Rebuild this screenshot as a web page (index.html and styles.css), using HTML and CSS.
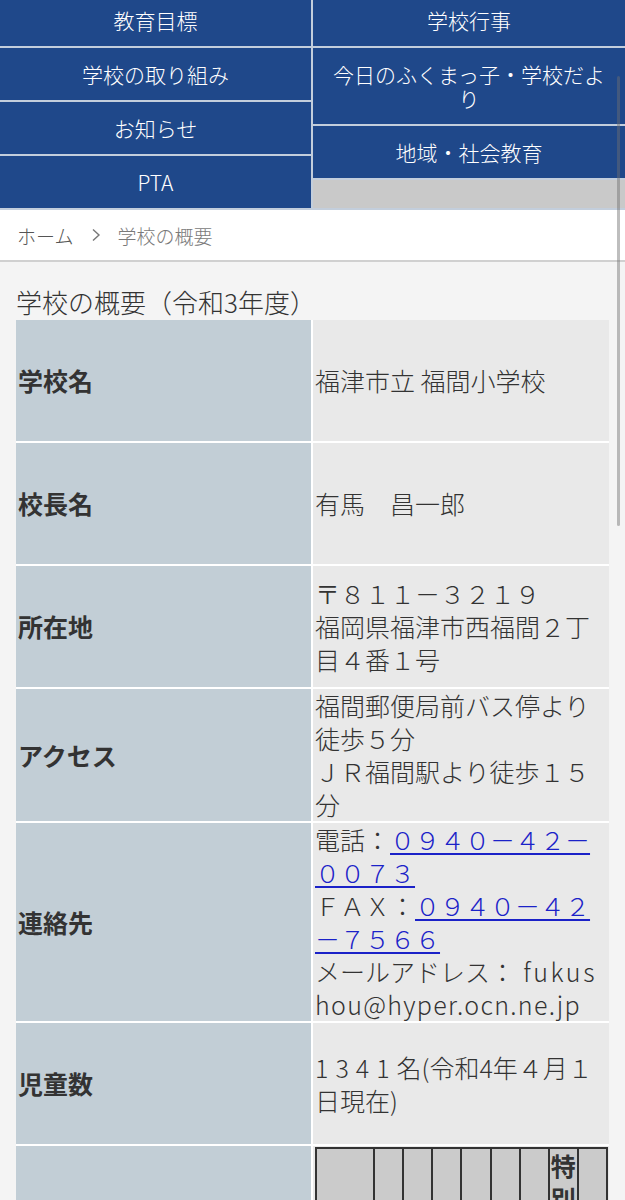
FILE: index.html
```html
<!DOCTYPE html>
<html lang="ja">
<head>
<meta charset="utf-8">
<title>学校の概要</title>
<link rel="stylesheet" href="styles.css">
</head>
<body>
<nav class="gnav">
  <ul class="gnav-col">
    <li class="gnav-item">教育目標</li>
    <li class="gnav-item">学校の取り組み</li>
    <li class="gnav-item">お知らせ</li>
    <li class="gnav-item">PTA</li>
  </ul>
  <ul class="gnav-col">
    <li class="gnav-item">学校行事</li>
    <li class="gnav-item">今日のふくまっ子・学校だより</li>
    <li class="gnav-item">地域・社会教育</li>
    <li class="gnav-filler"></li>
  </ul>
</nav>

<div class="breadcrumb">
  <span class="crumb">ホーム</span>
  <svg class="crumb-sep" width="10" height="14" viewBox="0 0 10 14"><polyline points="2,1.5 8,7 2,12.5" fill="none" stroke="#777" stroke-width="1.4"/></svg>
  <span class="crumb current">学校の概要</span>
</div>

<main class="main">
  <h1 class="page-title">学校の概要（令和3年度）</h1>
  <table class="outline">
    <colgroup><col class="col-head"><col class="col-body"></colgroup>
    <tr><th>学校名</th><td>福津市立 福間小学校</td></tr>
    <tr><th>校長名</th><td>有馬　昌一郎</td></tr>
    <tr><th>所在地</th><td>〒８１１－３２１９<br>福岡県福津市西福間２丁目４番１号</td></tr>
    <tr><th>アクセス</th><td>福間郵便局前バス停より徒歩５分<br>ＪＲ福間駅より徒歩１５分</td></tr>
    <tr><th>連絡先</th><td>電話：<a class="tel" href="#">０９４０－４２－００７３</a><br>ＦＡＸ：<a class="tel" href="#">０９４０－４２－７５６６</a><br>メールアドレス：<span class="latin-wide"> fukus</span><span class="latin">hou@hyper.ocn.ne.jp</span></td></tr>
    <tr><th>児童数</th><td><span class="num">1341</span>名(令和4年４月１日現在)</td></tr>
    <tr><th>学級数</th><td class="nested-cell">
      <table class="classes">
        <colgroup><col class="cc-first"><col><col><col><col><col><col><col><col></colgroup>
        <tr><th>学年</th><th>１年</th><th>２年</th><th>３年</th><th>４年</th><th>５年</th><th>６年</th><th>特別支援学級</th><th>計</th></tr>
      </table>
    </td></tr>
  </table>
</main>

<div class="scroll-thumb"></div>
</body>
</html>
```

FILE: styles.css
```css
html, body {
  margin: 0;
  padding: 0;
}
body {
  background: #f4f4f4;
  font-family: "Noto Sans CJK JP", "Noto Sans", sans-serif;
  font-weight: 300;
  color: #333;
  width: 625px;
  overflow: hidden;
}

/* global nav */
.gnav {
  display: grid;
  grid-template-columns: 311px 1fr;
  column-gap: 2px;
  background: #c3cedc;
  padding-bottom: 2px;
}
.gnav-col {
  list-style: none;
  margin: 0;
  padding: 0;
  display: flex;
  flex-direction: column;
  gap: 2px;
}
.gnav-item {
  background: #1f488a;
  color: #fff;
  font-size: 21px;
  line-height: 24px;
  padding: 14px 10px;
  text-align: center;
}
.gnav-item:first-child {
  padding-top: 8px;
}
.gnav-filler {
  flex: 1;
  background: #c9c9c9;
}

/* breadcrumb */
.breadcrumb {
  background: #fff;
  height: 50px;
  border-bottom: 2px solid #d0d0d0;
  display: flex;
  align-items: center;
  padding: 0 17px;
  font-size: 19px;
  color: #555;
}
.crumb-sep {
  margin: 0 16px 0 18px;
}
.crumb.current {
  color: #7a7a7a;
}

/* main */
.main {
  padding: 0 16px 40px;
}
.page-title {
  margin: 0;
  padding-top: 23px;
  font-size: 26px;
  line-height: 34px;
  font-weight: 300;
  color: #333;
}
.outline {
  margin-top: 1px;
  width: 593px;
  table-layout: fixed;
  border-collapse: separate;
  border-spacing: 0;
}
.col-head { width: 297px; }
.col-body { width: 296px; }
.outline > tbody > tr > th,
.outline > tbody > tr > td {
  height: 121px;
  padding: 0 2px;
  vertical-align: middle;
  font-size: 25px;
  line-height: 33px;
  color: #333;
  text-align: left;
  word-break: break-all;
}
.outline > tbody > tr > th {
  background: #c2ced6;
  font-weight: bold;
  border-right: 2px solid #fff;
}
.outline > tbody > tr > td {
  background: #e9e9e9;
}
.outline > tbody > tr + tr > th,
.outline > tbody > tr + tr > td {
  border-top: 2px solid #fff;
}
.tel {
  color: #1b22c8;
  text-decoration: underline;
  text-underline-offset: 3px;
}
.latin {
  letter-spacing: 1.3px;
}
.latin-wide {
  letter-spacing: 2.6px;
}
.num {
  letter-spacing: 7px;
}
.outline > tbody > tr > td.nested-cell {
  vertical-align: top;
  padding: 1px 0 2px 2px;
}

/* class table */
.classes {
  width: 293px;
  table-layout: fixed;
  border-collapse: separate;
  border-spacing: 0;
  border: 1px solid #333;
}
.classes col { width: 29px; }
.classes col.cc-first { width: 58px; }
.classes th {
  background: #cbcbcb;
  border: 1px solid #333;
  padding: 0;
  font-size: 25px;
  line-height: 33px;
  font-weight: bold;
  color: #333;
  text-align: center;
  vertical-align: middle;
  word-break: break-all;
}

/* overlay scrollbar */
.scroll-thumb {
  position: fixed;
  top: 76px;
  right: 5px;
  width: 3px;
  height: 450px;
  border-radius: 2px;
  background: rgba(110, 110, 110, 0.45);
}
```
